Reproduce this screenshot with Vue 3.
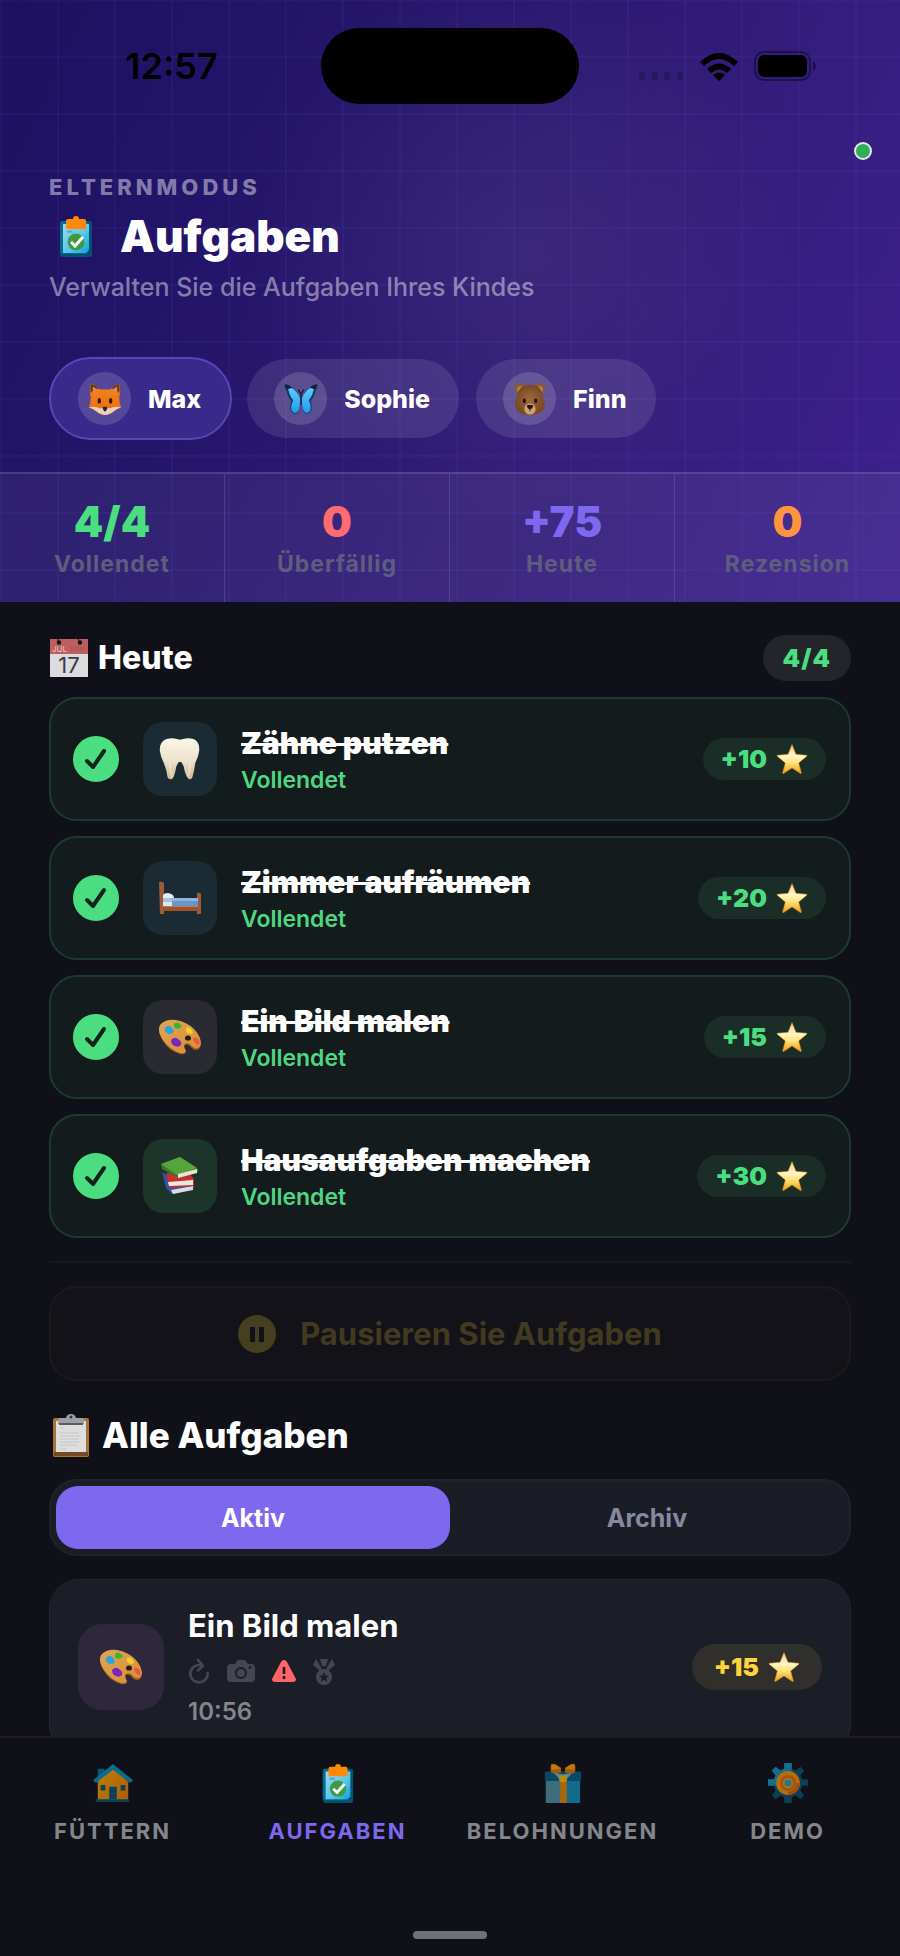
<template>
  <div class="app">
    <svg class="sprite" width="0" height="0" aria-hidden="true">
      <defs>
        <linearGradient id="g-star" x1="0" y1="0" x2="0" y2="1">
          <stop offset="0" stop-color="#f3c98a" />
          <stop offset="0.4" stop-color="#fff6c4" />
          <stop offset="0.62" stop-color="#ffe47a" />
          <stop offset="1" stop-color="#f09a12" />
        </linearGradient>
        <linearGradient id="g-paper" x1="0" y1="0" x2="1" y2="1">
          <stop offset="0" stop-color="#9fd8f0" />
          <stop offset="0.55" stop-color="#5cc6ec" />
          <stop offset="1" stop-color="#0ba4dc" />
        </linearGradient>
        <linearGradient id="g-fox" x1="0" y1="0" x2="0" y2="1">
          <stop offset="0" stop-color="#f08a1d" />
          <stop offset="1" stop-color="#f2640f" />
        </linearGradient>
        <linearGradient id="g-wing" x1="0" y1="0" x2="0" y2="1">
          <stop offset="0" stop-color="#5fd0ff" />
          <stop offset="1" stop-color="#1e9df0" />
        </linearGradient>
        <radialGradient id="g-bear">
          <stop offset="0" stop-color="#a06a3c" />
          <stop offset="1" stop-color="#7a4822" />
        </radialGradient>
        <linearGradient id="g-tooth" x1="0" y1="0" x2="0" y2="1">
          <stop offset="0" stop-color="#fbf6e6" />
          <stop offset="0.55" stop-color="#ece2cd" />
          <stop offset="1" stop-color="#d3b592" />
        </linearGradient>
        <linearGradient id="g-palette" x1="0" y1="0" x2="1" y2="1">
          <stop offset="0" stop-color="#e0a552" />
          <stop offset="1" stop-color="#d68f35" />
        </linearGradient>
        <linearGradient id="g-house" x1="0" y1="0" x2="1" y2="1">
          <stop offset="0" stop-color="#ffb300" />
          <stop offset="1" stop-color="#f57c00" />
        </linearGradient>

        <symbol id="star" viewBox="0 0 32 32">
          <path d="M16 1.5 20 11.3 30.6 12.2 Q31.5 12.5 30.8 13.2 L22.7 20 25.4 29.8 Q25.4 31 24.3 30.5 L16 25 7.7 30.5 Q6.6 31 6.6 29.8 L9.3 20 1.2 13.2 Q.5 12.5 1.4 12.2 L12 11.3 Z" fill="url(#g-star)" stroke="#c98320" stroke-width=".5" />
        </symbol>

        <symbol id="tasks" viewBox="0 0 42 42">
          <rect x="5" y="6" width="32" height="36" rx="2.5" fill="#04506f" />
          <rect x="5" y="6" width="28" height="33" rx="2.5" fill="#086a91" />
          <path d="M8 9h26v26l-3 3H8z" fill="url(#g-paper)" />
          <path d="M12 17h6M12 16h5" stroke="#4d9fc0" stroke-width="1" />
          <path d="M11 6q0-2 2-2h5q0-3 3-3t3 3h5q2 0 2 2v8H11z" fill="#ff8a05" />
          <circle cx="21" cy="27" r="8.5" fill="#3b9a43" />
          <path d="m16 27 4 4 8-9" fill="none" stroke="#fff" stroke-width="3" />
        </symbol>

        <symbol id="fox" viewBox="0 0 36 36">
          <path d="M3 2q5 1 9 6h12q4-5 9-6 2 7 0 14 0 6 2 11-4 1-7 4-5 4-10 4t-10-4q-3-3-7-4 2-5 2-11-2-7 0-14z" fill="url(#g-fox)" />
          <path d="M3 2q5 1 8 5-5 1-8 5-1-5 0-10zM33 2q-5 1-8 5 5 1 8 5 1-5 0-10z" fill="#6a3420" />
          <path d="M5 5q3 1 5 3l-5 4zM31 5q-3 1-5 3l5 4z" fill="#e08a4c" />
          <path d="M1 27q7-2 12 1 3-2 5-2t5 2q5-3 12-1-5 1-8 4-5 4-9 4t-9-4q-3-3-8-4z" fill="#e3d5c2" />
          <ellipse cx="12" cy="20" rx="1.8" ry="3" fill="#2a1a15" />
          <ellipse cx="24" cy="20" rx="1.8" ry="3" fill="#2a1a15" />
          <path d="M15 27q3-2 6 0l-2 4h-2z" fill="#35231f" />
        </symbol>

        <symbol id="butterfly" viewBox="0 0 36 36">
          <path d="M17 16Q13 6 1 2q-1 1 0 4 2 3 3 8 2 5 4 6-2 4-1 10 3 6 8 2 2-4 2-13zM19 16Q23 6 35 2q1 1 0 4-2 3-3 8-2 5-4 6 2 4 1 10-3 6-8 2-2-4-2-13z" fill="#17385f" />
          <path d="M17 17Q13 7 3 4q2 5 3 9 2 5 4 6-3 5-2 11 3 5 7 1 2-4 2-13zM19 17Q23 7 33 4q-2 5-3 9-2 5-4 6 3 5 2 11-3 5-7 1-2-4-2-13z" fill="url(#g-wing)" />
          <path d="M1 2q5 1 8 4l-6 2zM35 2q-5 1-8 4l6 2z" fill="#13213b" />
          <path d="M18 13v11M18 13l-3-5M18 13l3-5" stroke="#10141f" stroke-width="1.2" fill="none" />
        </symbol>

        <symbol id="bear" viewBox="0 0 36 36">
          <circle cx="7.5" cy="7" r="6" fill="#8a5a33" />
          <circle cx="28.5" cy="7" r="6" fill="#8a5a33" />
          <circle cx="8" cy="8" r="3.5" fill="#b5845c" />
          <circle cx="28" cy="8" r="3.5" fill="#b5845c" />
          <path d="M18 3q13 0 14 14 3 5 1 10-3 8-15 8T3 27q-2-5 1-10Q5 3 18 3z" fill="url(#g-bear)" />
          <ellipse cx="18" cy="28.5" rx="6" ry="6" fill="#cfa273" />
          <ellipse cx="12" cy="20" rx="1.6" ry="2.4" fill="#1c110b" />
          <ellipse cx="24" cy="20" rx="1.6" ry="2.4" fill="#1c110b" />
          <path d="M14.5 25q3.5-2 7 0-1 4-3.5 4t-3.5-4zM17.5 28h1v3h-1z" fill="#24150f" />
        </symbol>

        <symbol id="calendar" viewBox="0 0 40 40">
          <path d="M1 1h38v38H1z" fill="#dcdcde" />
          <path d="M1 1h38v15H1z" fill="#bb5f60" />
          <circle cx="10" cy="4.5" r="2.2" fill="#191016" />
          <circle cx="31" cy="4.5" r="2.2" fill="#191016" />
          <path d="M9 1v3M29 1l2 3" stroke="#191016" />
          <path d="M23 8v5M26 9v4M29 8v5M32 9v4M35 8v5" stroke="#a54e50" />
          <text x="3" y="14" font-family="Inter, sans-serif" font-size="8" font-weight="400" fill="#ecc4c0">JUL</text>
          <text x="20" y="35" text-anchor="middle" font-family="Inter, sans-serif" font-size="22" font-weight="400" fill="#3b3b3f">17</text>
        </symbol>

        <symbol id="clipboard" viewBox="0 0 40 44">
          <rect x="2" y="5" width="36" height="39" rx="2" fill="#a87338" />
          <path d="M3 39h34v4H3z" fill="#744a25" />
          <path d="M5 8h30v31H5z" fill="#dededf" />
          <path d="M9 15h5M9 20h19M9 23h21M9 26h19M9 29h20M9 32h18M9 36h6" stroke="#c6c6ca" />
          <path d="M7 7q0-2 2-2h6q1-4 5-4t5 4h6q2 0 2 2v4H7z" fill="#9fa0a5" />
          <path d="M8 10h24v2H8z" fill="#5b5c60" />
          <circle cx="20" cy="4" r="1.5" fill="#35353a" />
        </symbol>

        <symbol id="tooth" viewBox="0 0 44 46">
          <path d="M8 2q7-2 14 1 7-3 14-1 7 3 6 13-1 7-4 12-1 8-3 15-1 3-4 2-4-5-5-13-2-5-4-5t-4 5q-1 8-4 13-4 1-5-2-1-8-4-15-3-5-4-12Q0 5 8 2z" fill="url(#g-tooth)" />
          <path d="M8 6q6-2 11 1M12 27q-1 8 2 15M32 27q1 8-2 15" fill="none" stroke="#fffaf0" stroke-width="2" opacity=".4" />
        </symbol>

        <symbol id="bed" viewBox="0 0 44 34">
          <path d="M1 1q3-1 5 1v31H2z" fill="#a05a36" />
          <path d="M39 12q3-1 4 1v20h-4z" fill="#a05a36" />
          <path d="M5 25h35v5H5z" fill="#9a5430" />
          <path d="M5 24h35v2H5z" fill="#c27d4f" />
          <path d="M5 16h10v6H5z" fill="#a9c1dd" />
          <path d="M5 15q0-3 5-3 6 1 6 5H5z" fill="#e5edf7" />
          <path d="M14 17h26v8H14z" fill="#6795cc" />
          <path d="M14 17h26v3H14z" fill="#8fb4df" />
          <path d="M5 21h9v4H5z" fill="#dbe5f0" />
        </symbol>

        <symbol id="palette" viewBox="0 0 44 36">
          <path d="M2 7Q7 0 18 2q11 2 18 9 6 6 7 14-1 6-5 6-3 0-6-4-4-3-6 0 0 3 2 6-1 3-6 2Q11 32 5 22-1 13 2 7z" fill="#9c5f1c" />
          <path d="M2 6Q7 0 18 1q11 2 18 9 6 6 7 14-1 6-5 5-3 0-6-4-4-2-6 1 0 3 2 6-1 3-6 2Q11 30 5 21-1 12 2 6z" fill="url(#g-palette)" />
          <ellipse cx="30" cy="19" rx="3" ry="2.6" fill="#231d22" />
          <path d="M7 9q3-4 6-1 4 3 2 6-4 2-6 0-3-2-2-5z" fill="#2ba3dc" />
          <path d="M16 5q3-3 6 0 3 3 0 4-4 2-6-1z" fill="#35b82f" />
          <path d="M28 9q3-2 6 2 2 4-1 4-4 0-5-3z" fill="#f8cd2c" />
          <path d="M35 19q4-1 6 3 1 4-1 4-5-2-5-7z" fill="#ec5548" />
          <path d="M13 21q4-4 7-1 4 2 3 6-3 3-6 1-4-1-4-6z" fill="#7c27b5" />
        </symbol>

        <symbol id="books" viewBox="0 0 44 44">
          <path d="m4 18 7 5 22 4 3 7-22 6-6-6z" fill="#2c55a8" />
          <path d="m13 36 22-4v4l-20 4z" fill="#d9dde2" />
          <path d="m8 19 24 1 4 5v7l-25 2z" fill="#c82c2c" />
          <path d="m10 28 25-2v5l-24 1z" fill="#eee8e0" />
          <path d="m3 10 19-7 18 12v3l-20 6L4 15z" fill="#2f7d2c" />
          <path d="m3 10 19-7 17 11-20 7z" fill="#56a53c" />
          <path d="m20 20 19-5v4l-19 5z" fill="#e6e4dc" />
        </symbol>

        <symbol id="house" viewBox="0 0 42 42">
          <path d="M5 6h7v10H5z" fill="#0277a8" />
          <path d="M5 16 21 4l16 16v19H5z" fill="url(#g-house)" />
          <path d="m0 18 21-17 21 17-3 3L21 7 3 21z" fill="#0a94bf" />
          <path d="M3 38h35v3H3z" fill="#06557a" />
          <path d="M17 25h8v13h-8zM8 23h5v6H8zM29 23h5v6h-5z" fill="#075878" />
        </symbol>

        <symbol id="gift" viewBox="0 0 42 42">
          <path d="M3 16h36v26H3z" fill="#1392bd" />
          <path d="M3 16h18v26H3z" fill="#5095a8" />
          <path d="M2 9h38v10H2z" fill="#056184" />
          <path d="m11 10 10 2 10-2-8 9h-4z" fill="#7eb6d6" />
          <path d="M18 16h7v26h-7z" fill="#eb8c05" />
          <path d="M17 13h8v6q-4 3-8 0z" fill="#ffc107" />
          <path d="M8 3q0-3 4-2l7 4v5l-7 1q-4 0-4-3zM34 3q0-3-4-2l-7 4v5l7 1q4 0 4-3z" fill="#ef7604" />
          <path d="M9 2q5-2 9 4l-9 1zM33 2q-5-2-9 4l9 1z" fill="#ffac12" />
        </symbol>

        <symbol id="gear" viewBox="0 0 42 42">
          <path d="M17 0h8v6l4 2 5-4 4 4-4 5 2 4h6v7h-6l-2 5 4 5-4 4-5-4-4 2v6h-8v-6l-4-2-5 4-4-4 4-5-2-5H0v-7h6l2-4-4-5 4-4 5 4 4-2z" fill="#0a5373" />
          <path d="M17 0h8v6L21 21 6 24H0v-7h6l2-4-4-5 4-4 5 4 4-2z" fill="#1597c2" />
          <circle cx="21" cy="21" r="12.5" fill="#fb9907" />
          <circle cx="21" cy="21" r="7" fill="none" stroke="#e0701a" stroke-width="3" />
          <path d="M21 33.5A12.5 12.5 0 0 0 33.5 21H30a9 9 0 0 1-9 9z" fill="#e5630f" />
          <circle cx="21" cy="21" r="3.5" fill="#17a8d0" />
        </symbol>
      </defs>
    </svg>

    <header class="hero">
      <div class="status-bar">
        <div class="status-bar__time">12:57</div>
        <div class="status-bar__island"></div>
        <div class="status-bar__icons">
          <svg width="46" height="10" viewBox="0 0 46 10" aria-hidden="true">
            <g fill="#000" opacity=".2">
              <rect x="1" y="1" width="6" height="8" rx="2" />
              <rect x="14" y="1" width="6" height="8" rx="2" />
              <rect x="26" y="1" width="6" height="8" rx="2" />
              <rect x="39" y="1" width="6" height="8" rx="2" />
            </g>
          </svg>
          <svg width="40" height="29" viewBox="0 0 40 29" aria-hidden="true">
            <path d="M1 10Q20-8 39 10l-4 4Q20 0 5 14zM8 17q12-11 24 0l-4 4q-8-7-16 0zM14 23q6-5 12 0l-6 6z" fill="#000" />
          </svg>
          <svg width="62" height="30" viewBox="0 0 62 30" aria-hidden="true">
            <rect x="1" y="1" width="55" height="28" rx="9" fill="none" stroke="#000" stroke-width="2" opacity=".4" />
            <rect x="4" y="4" width="49" height="22" rx="6" fill="#000" />
            <path d="M59 10q3 2 3 5t-3 5z" fill="#000" opacity=".45" />
          </svg>
        </div>
      </div>

      <span class="hero__online"></span>

      <div class="hero__intro">
        <div class="hero__eyebrow">ELTERNMODUS</div>
        <h1 class="hero__title">
          <svg class="hero__icon" aria-hidden="true"><use href="#tasks" /></svg>
          Aufgaben
        </h1>
        <p class="hero__subtitle">Verwalten Sie die Aufgaben Ihres Kindes</p>
      </div>

      <div class="kids">
        <button
          v-for="kid in kids"
          :key="kid.name"
          class="kid"
          :class="{ 'kid--active': kid.name === activeKid }"
          type="button"
          @click="activeKid = kid.name"
        >
          <span class="kid__avatar">
            <svg width="34" height="34" aria-hidden="true"><use :href="`#${kid.icon}`" /></svg>
          </span>
          {{ kid.name }}
        </button>
      </div>

      <div class="stats">
        <div v-for="stat in stats" :key="stat.label" class="stat">
          <div class="stat__value" :class="`stat__value--${stat.tone}`">{{ stat.value }}</div>
          <div class="stat__label">{{ stat.label }}</div>
        </div>
      </div>
    </header>

    <main class="content">
      <div class="section-head">
        <h2 class="section-title">
          <svg width="40" height="40" aria-hidden="true"><use href="#calendar" /></svg>
          Heute
        </h2>
        <span class="section-count">{{ doneCount }}/{{ todayTasks.length }}</span>
      </div>

      <ul class="today">
        <li v-for="task in todayTasks" :key="task.id" class="task">
          <span class="task__check">
            <input :id="task.id" v-model="task.done" type="checkbox" />
            <svg width="24" height="24" viewBox="0 0 24 24" aria-hidden="true">
              <path d="m3 14 6 6L20 4" fill="none" stroke="#10241b" stroke-width="4" stroke-linecap="round" stroke-linejoin="round" />
            </svg>
          </span>
          <span class="task__tile" :class="`task__tile--${task.tone}`">
            <svg width="44" height="44" aria-hidden="true"><use :href="`#${task.icon}`" /></svg>
          </span>
          <div class="task__body">
            <label class="task__name" :for="task.id">{{ task.name }}</label>
            <div class="task__state">Vollendet</div>
          </div>
          <span class="reward">
            +{{ task.stars }}
            <svg width="32" height="32" aria-hidden="true"><use href="#star" /></svg>
          </span>
        </li>
      </ul>

      <button class="pause" type="button" disabled>
        <svg width="38" height="38" viewBox="0 0 38 38" aria-hidden="true">
          <circle cx="19" cy="19" r="19" fill="#453f1f" />
          <path d="M12 12h5v15h-5zM21 12h5v15h-5z" fill="#111118" />
        </svg>
        Pausieren Sie Aufgaben
      </button>

      <h2 class="section-title section-title--all">
        <svg width="44" height="44" aria-hidden="true"><use href="#clipboard" /></svg>
        Alle Aufgaben
      </h2>

      <div class="tabs">
        <button
          v-for="tab in ['Aktiv', 'Archiv']"
          :key="tab"
          class="tab"
          :class="{ 'tab--active': tab === activeTab }"
          type="button"
          @click="activeTab = tab"
        >
          {{ tab }}
        </button>
      </div>

      <article class="entry">
        <span class="entry__tile">
          <svg width="44" height="44" aria-hidden="true"><use href="#palette" /></svg>
        </span>
        <div class="entry__body">
          <h3 class="entry__name">Ein Bild malen</h3>
          <div class="entry__flags">
            <svg width="22" height="28" viewBox="0 0 22 28" aria-hidden="true">
              <path d="M14 7.500A8.700 8.700 0 1 0 19.700 15" fill="none" stroke="#45464f" stroke-width="2.6" stroke-linecap="round" />
              <path d="m10 2 5 5.500-5 5" fill="none" stroke="#45464f" stroke-width="2.6" stroke-linecap="round" stroke-linejoin="round" />
            </svg>
            <svg width="28" height="28" viewBox="0 0 28 28" aria-hidden="true">
              <path fill-rule="evenodd" d="M4 6h4l2-3q1-1 2-1h5q1 0 2 1l2 3h3q4 0 4 4v10q0 4-4 4H4q-4 0-4-4V10q0-4 4-4zm10 3a6 6 0 1 0 0 12 6 6 0 0 0 0-12zm0 2a4 4 0 1 1 0 8 4 4 0 0 1 0-8zm9-3a1.5 1.5 0 1 0 0 3 1.5 1.5 0 0 0 0-3z" fill="#45464f" />
            </svg>
            <svg width="24" height="28" viewBox="0 0 24 28" aria-hidden="true">
              <path d="M12 2q2 0 3 2l9 17q0 3-3 3H3q-3 0-3-3L9 4q1-2 3-2z" fill="#ff6469" />
              <path d="M12 9v7M12 18v3" stroke="#1b1c27" stroke-width="2.6" />
            </svg>
            <svg width="22" height="28" viewBox="0 0 22 28" aria-hidden="true">
              <path d="M3 1 0 7l7 6 2-2zM7 1h8l-2 7H9zM19 1l3 6-7 6-2-2z" fill="#45464f" />
              <circle cx="11" cy="19" r="8" fill="#45464f" />
              <path d="m11 14 1.5 3.4 3.7.3-2.8 2.4.9 3.6-3.3-2-3.3 2 .9-3.6-2.8-2.4 3.7-.3z" fill="#1b1c27" />
            </svg>
          </div>
          <time class="entry__time">10:56</time>
        </div>
        <span class="reward reward--gold">
          +15
          <svg width="32" height="32" aria-hidden="true"><use href="#star" /></svg>
        </span>
      </article>
    </main>

    <footer class="dock">
      <nav class="nav">
        <a
          v-for="item in navItems"
          :key="item.label"
          class="nav__item"
          :class="{ 'nav__item--active': item.active }"
          href="#"
        >
          <svg class="nav__icon" width="40" height="40" aria-hidden="true"><use :href="`#${item.icon}`" /></svg>
          {{ item.label }}
        </a>
      </nav>
      <div class="dock__indicator"></div>
    </footer>
  </div>
</template>

<script setup>
  import { computed, ref } from 'vue'

  const activeKid = ref('Max')
  const activeTab = ref('Aktiv')

  const kids = [
    { name: 'Max', icon: 'fox' },
    { name: 'Sophie', icon: 'butterfly' },
    { name: 'Finn', icon: 'bear' }
  ]

  const stats = [
    { value: '4/4', label: 'Vollendet', tone: 'green' },
    { value: '0', label: 'Überfällig', tone: 'red' },
    { value: '+75', label: 'Heute', tone: 'violet' },
    { value: '0', label: 'Rezension', tone: 'orange' }
  ]

  const todayTasks = ref([
    { id: 'task-teeth', name: 'Zähne putzen', icon: 'tooth', tone: 'blue', stars: 10, done: true },
    { id: 'task-room', name: 'Zimmer aufräumen', icon: 'bed', tone: 'blue', stars: 20, done: true },
    { id: 'task-paint', name: 'Ein Bild malen', icon: 'palette', tone: 'plum', stars: 15, done: true },
    { id: 'task-homework', name: 'Hausaufgaben machen', icon: 'books', tone: 'green', stars: 30, done: true }
  ])

  const doneCount = computed(() => todayTasks.value.filter((task) => task.done).length)

  const navItems = [
    { label: 'FÜTTERN', icon: 'house' },
    { label: 'AUFGABEN', icon: 'tasks', active: true },
    { label: 'BELOHNUNGEN', icon: 'gift' },
    { label: 'DEMO', icon: 'gear' }
  ]
</script>

<style>
  body {
    background: #101118;
  }
</style>

<style scoped>
  .app {
    display: flex;
    flex-direction: column;
    height: 100vh;
    overflow: hidden;
    background: #101118;
    color: #fff;
    font-family: Inter, 'Noto Sans', sans-serif;
  }

  .app * {
    box-sizing: border-box;
  }

  button {
    border: 0;
    color: inherit;
    font: inherit;
    cursor: pointer;
  }

  h1,
  h2,
  h3,
  p,
  ul {
    margin: 0;
    padding: 0;
  }

  svg {
    flex: none;
  }

  .sprite {
    position: absolute;
  }

  /* Header */
  .hero {
    position: relative;
    flex: none;
    background:
      linear-gradient(rgba(140, 120, 255, 0.05) 2px, transparent 2px) 0 -1px / 57px 57px,
      linear-gradient(90deg, rgba(140, 120, 255, 0.05) 2px, transparent 2px) 0 0 / 57px 57px,
      radial-gradient(circle at 58% 42%, rgba(90, 75, 140, 0.28), transparent 45%),
      linear-gradient(115deg, #1d1161 0%, #24156a 30%, #321c7a 65%, #3d218e 100%);
  }

  .status-bar {
    display: grid;
    grid-template-columns: 1fr 258px 1fr;
    align-items: center;
    height: 132px;
    color: #000;
  }

  .status-bar__time {
    padding-left: 22px;
    font-size: 36px;
    font-weight: 600;
    text-align: center;
  }

  .status-bar__island {
    height: 76px;
    border-radius: 38px;
    background: #000;
  }

  .status-bar__icons {
    display: flex;
    align-items: center;
    justify-content: flex-end;
    gap: 15px;
    padding-right: 84px;
  }

  .status-bar__icons svg:first-child {
    align-self: flex-end;
  }

  .hero__online {
    position: absolute;
    top: 142px;
    right: 28px;
    width: 18px;
    height: 18px;
    border: 2px solid #e3e6ee;
    border-radius: 50%;
    background: #2fae56;
  }

  .hero__intro {
    display: flex;
    flex-direction: column;
    gap: 9px;
    padding: 41px 49px 0;
  }

  .hero__eyebrow {
    color: rgba(255, 255, 255, 0.46);
    font-size: 22px;
    font-weight: 800;
    letter-spacing: 4px;
    line-height: 28px;
  }

  .hero__title {
    display: flex;
    align-items: center;
    gap: 23px;
    padding-left: 6px;
    font-size: 44px;
    font-weight: 900;
    line-height: 52px;
  }

  .hero__icon {
    width: 42px;
    height: 42px;
  }

  .hero__subtitle {
    color: rgba(255, 255, 255, 0.46);
    font-size: 25px;
    font-weight: 500;
    line-height: 32px;
  }

  .kids {
    display: flex;
    gap: 13px;
    padding: 54px 49px 32px;
  }

  .kid {
    display: flex;
    align-items: center;
    gap: 17px;
    height: 83px;
    padding: 0 29px 0 27px;
    border: 2px solid transparent;
    border-radius: 42px;
    background: rgba(255, 255, 255, 0.1);
    background-clip: padding-box;
    font-size: 25px;
    font-weight: 800;
  }

  .kid--active {
    border-color: #5b45b5;
    background: #38298a;
  }

  .kid__avatar {
    display: grid;
    place-items: center;
    width: 53px;
    height: 53px;
    border-radius: 50%;
    background: rgba(255, 255, 255, 0.15);
  }

  .stats {
    display: grid;
    grid-template-columns: repeat(4, 1fr);
    border-top: 2px solid rgba(255, 255, 255, 0.12);
    background: rgba(255, 255, 255, 0.06);
  }

  .stat {
    padding: 24px 0;
    border-right: 1px solid rgba(255, 255, 255, 0.12);
    text-align: center;
  }

  .stat:last-child {
    border-right: 0;
  }

  .stat__value {
    margin-bottom: 4px;
    font-size: 42px;
    font-weight: 900;
    line-height: 48px;
  }

  .stat__value--green {
    color: #4ade80;
  }

  .stat__value--red {
    color: #ff6b6f;
  }

  .stat__value--violet {
    color: #7d68ee;
  }

  .stat__value--orange {
    color: #ff9440;
  }

  .stat__label {
    color: #5f5d7e;
    font-size: 23px;
    font-weight: 700;
    letter-spacing: 1px;
    line-height: 28px;
  }

  /* Today */
  .content {
    flex: 1;
    min-height: 0;
    padding: 33px 49px 0;
    overflow-y: auto;
    scrollbar-width: none;
  }

  .section-head {
    display: flex;
    align-items: center;
    justify-content: space-between;
    margin-bottom: 16px;
  }

  .section-title {
    display: flex;
    align-items: center;
    gap: 9px;
    font-size: 32px;
    font-weight: 800;
    line-height: 46px;
  }

  .section-count {
    padding: 0 20px;
    border-radius: 23px;
    background: #24252b;
    color: #4ade80;
    font-size: 25px;
    font-weight: 900;
    letter-spacing: 1px;
    line-height: 46px;
  }

  .today {
    display: flex;
    flex-direction: column;
    gap: 15px;
    padding-bottom: 23px;
    border-bottom: 2px solid #181920;
    list-style: none;
  }

  .task {
    display: flex;
    align-items: center;
    height: 124px;
    padding: 0 23px 0 22px;
    border: 2px solid #1c3a30;
    border-radius: 28px;
    background: #141b1c;
  }

  .task__check {
    display: grid;
    place-items: center;
    margin-right: 24px;
  }

  .task__check > * {
    grid-area: 1 / 1;
  }

  .task__check input {
    width: 46px;
    height: 46px;
    margin: 0;
    border: 2px solid #4ade80;
    border-radius: 50%;
    appearance: none;
  }

  .task__check input:checked {
    background: #4ade80;
  }

  .task__check svg {
    pointer-events: none;
  }

  .task__tile,
  .entry__tile {
    display: grid;
    flex: none;
    place-items: center;
    width: 74px;
    height: 74px;
    margin-right: 24px;
    border-radius: 20px;
  }

  .task__tile--blue {
    background: #1b2b34;
  }

  .task__tile--plum {
    background: #2a2a32;
  }

  .task__tile--green {
    background: #1c3429;
  }

  .task__body,
  .entry__body {
    flex: 1;
    min-width: 0;
  }

  .task__name {
    display: block;
    margin-bottom: 5px;
    font-size: 30px;
    font-weight: 900;
    line-height: 36px;
    text-decoration: line-through;
    text-decoration-thickness: 3px;
  }

  .task__state {
    color: #4fd683;
    font-size: 23px;
    font-weight: 600;
    line-height: 28px;
  }

  .reward {
    display: flex;
    align-items: center;
    gap: 9px;
    height: 42px;
    padding: 0 18px;
    border-radius: 23px;
    background: #1a2d26;
    color: #4ade80;
    font-size: 25px;
    font-weight: 900;
  }

  .reward--gold {
    height: 46px;
    padding: 0 22px;
    background: #302f2b;
    color: #ffd43b;
  }

  .pause {
    display: flex;
    align-items: center;
    justify-content: center;
    gap: 24px;
    width: 100%;
    height: 95px;
    margin: 23px 0 30px;
    border: 2px solid #1b1b1c;
    border-radius: 28px;
    background: #121218;
    color: #413a20;
    font-size: 31px;
    font-weight: 700;
  }

  /* All tasks */
  .section-title--all {
    margin-bottom: 20px;
    font-size: 35px;
    line-height: 48px;
  }

  .tabs {
    display: grid;
    grid-template-columns: 1fr 1fr;
    height: 77px;
    margin-bottom: 23px;
    padding: 5px;
    border: 2px solid #20222a;
    border-radius: 28px;
    background: #1a1c26;
  }

  .tab {
    border-radius: 22px;
    background: transparent;
    color: #868aa0;
    font-size: 25px;
    font-weight: 700;
  }

  .tab--active {
    background: #7d68ee;
    color: #fff;
  }

  .entry {
    display: flex;
    align-items: center;
    padding: 28px;
    border: 1px solid #25272d;
    border-radius: 30px;
    background: #1b1d27;
  }

  .entry__tile {
    width: 86px;
    height: 86px;
    border-radius: 24px;
    background: #2f283c;
  }

  .entry__name {
    font-size: 31px;
    font-weight: 700;
    line-height: 36px;
  }

  .entry__flags {
    display: flex;
    gap: 17px;
    margin: 14px 0 12px;
  }

  .entry__time {
    display: block;
    color: #85868c;
    font-size: 24px;
    font-weight: 600;
    line-height: 28px;
  }

  /* Bottom navigation */
  .dock {
    display: flex;
    flex: none;
    flex-direction: column;
    align-items: center;
    gap: 86px;
    padding-bottom: 17px;
    border-top: 2px solid #1d1d20;
    background: #101118;
  }

  .nav {
    display: grid;
    grid-template-columns: repeat(4, 1fr);
    width: 100%;
    padding-top: 25px;
  }

  .nav__item {
    display: flex;
    flex-direction: column;
    align-items: center;
    gap: 14px;
    color: #85868b;
    font-size: 22px;
    font-weight: 700;
    letter-spacing: 2px;
    line-height: 28px;
    text-decoration: none;
  }

  .nav__icon {
    opacity: 0.7;
  }

  .nav__item--active {
    color: #7d68ee;
  }

  .nav__item--active .nav__icon {
    opacity: 1;
  }

  .dock__indicator {
    width: 74px;
    height: 8px;
    border-radius: 4px;
    background: #707078;
  }
</style>
